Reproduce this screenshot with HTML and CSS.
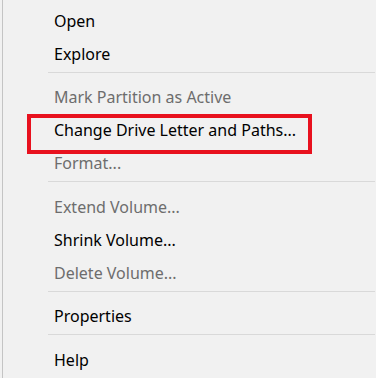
FILE: index.html
```html
<!DOCTYPE html>
<html>
<head>
<meta charset="utf-8">
<link rel="stylesheet" href="styles.css">
</head>
<body>
<div class="frame">
  <ul class="menu">
    <li class="item">Open</li>
    <li class="item">Explore</li>
    <li class="sep"></li>
    <li class="item disabled">Mark Partition as Active</li>
    <li class="item highlighted">Change Drive Letter and Paths...</li>
    <li class="item disabled">Format...</li>
    <li class="sep"></li>
    <li class="item disabled">Extend Volume...</li>
    <li class="item">Shrink Volume...</li>
    <li class="item disabled">Delete Volume...</li>
    <li class="sep"></li>
    <li class="item">Properties</li>
    <li class="sep"></li>
    <li class="item">Help</li>
  </ul>
</div>
</body>
</html>
```
FILE: styles.css
```css
html, body {
  margin: 0;
  padding: 0;
  background: #f1f1f1;
  height: 100%;
  overflow: hidden;
}
.frame {
  margin-left: 2px;
  border-left: 1px solid #c4c4c4;
  height: 100%;
  box-sizing: border-box;
}
.menu {
  list-style: none;
  margin: 0;
  padding: 4.5px 1px 0 45px;
  font-family: "Noto Sans", "Open Sans", sans-serif;
  font-size: 16px;
  color: #000;
}
.item {
  position: relative;
  height: 33px;
  line-height: 33px;
  padding-left: 6px;
  white-space: nowrap;
}
.disabled {
  color: #6d6d6d;
}
.sep {
  height: 1px;
  background: #d9d9d9;
  margin: 1px 0 8.5px;
}
.highlighted::after {
  content: "";
  position: absolute;
  left: -21px;
  top: 0;
  width: 285px;
  height: 40px;
  border: 4px solid #e8111e;
  box-sizing: border-box;
}
```
